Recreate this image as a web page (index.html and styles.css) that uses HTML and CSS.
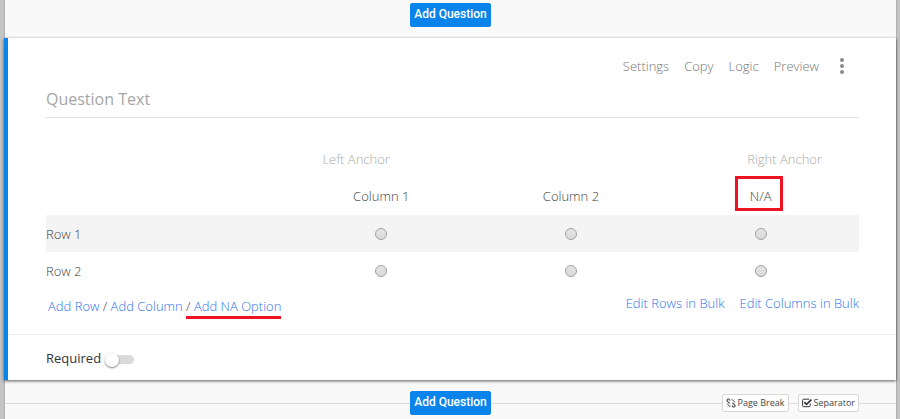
FILE: index.html
```html
<!DOCTYPE html>
<html lang="en">
<head>
<meta charset="utf-8">
<meta name="viewport" content="width=device-width, initial-scale=1">
<title>Survey editor</title>
<link rel="stylesheet" href="styles.css">
</head>
<body>
<main class="survey">
  <div class="insert-bar insert-bar-top">
    <button type="button" class="add-question">Add Question</button>
  </div>

  <section class="question">
    <div class="question-body">
      <nav class="actions">
        <a href="#settings">Settings</a>
        <a href="#copy">Copy</a>
        <a href="#logic">Logic</a>
        <a href="#preview">Preview</a>
        <button type="button" class="more" aria-label="More options">
          <svg width="6" height="16" viewBox="0 0 6 16"><g fill="#8b8b8b"><circle cx="3" cy="2" r="2"/><circle cx="3" cy="8" r="2"/><circle cx="3" cy="14" r="2"/></g></svg>
        </button>
      </nav>

      <input class="question-text" type="text" placeholder="Question Text" aria-label="Question Text">

      <div class="anchors">
        <input class="anchor" type="text" placeholder="Left Anchor" aria-label="Left Anchor">
        <input class="anchor" type="text" placeholder="Right Anchor" aria-label="Right Anchor">
      </div>

      <table class="matrix">
        <thead>
          <tr><td class="row-label"></td><th scope="col">Column 1</th><th scope="col">Column 2</th><th scope="col"><span class="marked">N/A</span></th></tr>
        </thead>
        <tbody>
          <tr>
            <th scope="row" class="row-label">Row 1</th>
            <td><input type="radio" name="row1" aria-label="Row 1, Column 1"></td>
            <td><input type="radio" name="row1" aria-label="Row 1, Column 2"></td>
            <td><input type="radio" name="row1" aria-label="Row 1, N/A"></td>
          </tr>
          <tr>
            <th scope="row" class="row-label">Row 2</th>
            <td><input type="radio" name="row2" aria-label="Row 2, Column 1"></td>
            <td><input type="radio" name="row2" aria-label="Row 2, Column 2"></td>
            <td><input type="radio" name="row2" aria-label="Row 2, N/A"></td>
          </tr>
        </tbody>
      </table>

      <div class="links">
        <div class="add-links"><a href="#row">Add Row</a> / <a href="#column">Add Column</a> <span class="underlined">/ <a href="#na">Add NA Option</a></span></div>
        <div class="bulk-links"><a href="#rows">Edit Rows in Bulk</a><a href="#columns">Edit Columns in Bulk</a></div>
      </div>
    </div>

    <div class="question-footer">
      <label for="required">Required</label>
      <input id="required" class="switch" type="checkbox">
    </div>
  </section>

  <div class="insert-bar insert-bar-bottom">
    <button type="button" class="add-question">Add Question</button>
    <div class="extras">
      <button type="button" class="extra">
        <svg width="10" height="10" viewBox="0 0 10 10" fill="none" stroke="#555" stroke-width="1.2"><path d="M4.3 2.5 3 1.2a1.3 1.3 0 0 0-1.8 1.8L3 4.8l1 .3M5.8 7.5 7 8.8A1.3 1.3 0 0 0 8.8 7L7 5.200 6 5"/><path stroke-width=".8" d="M6.200 2.700V.8M7.400 3.800h1.900M2.700 6.200H.8M3.800 7.300v1.900M6.900 3l1.300-1.300M3 7 1.700 8.300"/></svg>
        Page Break
      </button>
      <button type="button" class="extra">
        <svg width="10" height="10" viewBox="0 0 10 10" fill="none" stroke="#333"><path d="M8.200 5.500v2.200a1 1 0 0 1-1 1H1.600a1 1 0 0 1-1-1V2.200a1 1 0 0 1 1-1h5.600"/><path stroke-width="1.600" d="M2.300 4.200 4.500 6.300 9.400 1.600"/></svg>
        Separator
      </button>
    </div>
  </div>
</main>
</body>
</html>
```
FILE: styles.css
```css
* {
  box-sizing: border-box;
}

body {
  margin: 0;
  background: #c4c4c4;
  color: #444;
  font: 300 13px/20px "Open Sans", "Noto Sans", sans-serif;
}

button,
input {
  margin: 0;
  font: inherit;
}

a {
  color: #2f74e8;
  text-decoration: none;
}

.survey {
  min-height: 100vh;
  margin: 0 3px 0 4px;
  border: solid #b0b0b0;
  border-width: 0 1px;
  background: #f9f9f9;
}

.insert-bar {
  display: flex;
  justify-content: center;
  align-items: flex-start;
  position: relative;
}

.insert-bar-top {
  height: 38px;
  padding-top: 3px;
}

.insert-bar-bottom {
  padding-top: 11px;
}

.insert-bar-bottom::before {
  content: "";
  position: absolute;
  top: 23px;
  left: 0;
  right: 0;
  border-top: 1px solid #dcdcdc;
}

.add-question {
  position: relative;
  height: 24px;
  padding: 0 3px 2px;
  border: 1px solid #0a84ea;
  border-radius: 2px;
  background: #0a84ea;
  color: #fff;
  font-family: Roboto, sans-serif;
  font-size: 12px;
  font-weight: 500;
  line-height: 20px;
  white-space: nowrap;
}

.question {
  position: relative;
  margin-left: -1px;
  border-left: 4px solid #0a84ea;
  background: #fff;
  box-shadow: 0 1px 3px rgba(0, 0, 0, .65);
}

.question-body {
  padding: 18px 37px 18px 38px;
  border-bottom: 1px solid #eee;
}

.actions {
  display: flex;
  justify-content: flex-end;
  align-items: center;
  gap: 15px;
  padding-right: 14px;
}

.actions a {
  color: #777;
}

.more {
  display: flex;
  margin-left: 5px;
  padding: 0;
  border: 0;
  background: none;
}

.question-text {
  display: block;
  width: 100%;
  height: 42px;
  padding: 4px 0 0;
  border: 0;
  border-bottom: 1px solid #e2e2e2;
  font-size: 16px;
  font-weight: 400;
}

input::placeholder {
  color: #aaa;
  opacity: 1;
}

.question-text::placeholder {
  color: #a5a5a5;
}

.anchors {
  display: flex;
  justify-content: space-between;
  margin-top: 31px;
  padding: 0 37px 0 34%;
}

.anchor {
  width: 80px;
  height: 20px;
  padding: 0;
  border: 0;
}

.anchor:last-child {
  text-align: right;
}

.matrix {
  width: 100%;
  margin-top: 8px;
  border-collapse: collapse;
  table-layout: fixed;
}

.matrix th,
.matrix td {
  height: 37px;
  padding: 0 7px 0 0;
  font-weight: 300;
  text-align: center;
  vertical-align: middle;
}

.matrix thead th {
  height: 38px;
}

.matrix .row-label {
  width: 30%;
  text-align: left;
}

.matrix tbody tr:first-child {
  background: #f4f4f4;
}

.marked {
  position: relative;
}

.marked::before {
  content: "";
  position: absolute;
  inset: -11px -12px -6px -15px;
  border: 3px solid #ed1320;
}

.matrix input {
  display: block;
  width: 12px;
  height: 12px;
  margin: 0 auto;
  appearance: none;
  border: 1px solid #a2a2a2;
  border-radius: 50%;
  background: linear-gradient(#e5e5e5, #d9d9d9);
}

.links {
  display: flex;
  justify-content: space-between;
}

.add-links {
  padding: 7px 0 0 2px;
}

.underlined {
  padding-bottom: 1px;
  border-bottom: 3px solid #ed1320;
}

.bulk-links {
  display: flex;
  gap: 15px;
  padding-top: 4px;
}

.question-footer {
  display: flex;
  align-items: center;
  gap: 4px;
  height: 45px;
  padding-left: 38px;
  font-weight: 400;
}

.question-footer label {
  color: #333;
}

.switch {
  position: relative;
  width: 30px;
  height: 16px;
  margin-top: 4px;
  appearance: none;
}

.switch::before {
  content: "";
  position: absolute;
  inset: 3px 1px 4px 4px;
  border-radius: 5px;
  background: #dadada;
}

.switch::after {
  content: "";
  position: absolute;
  top: 1px;
  left: 0;
  width: 14px;
  height: 14px;
  border-radius: 50%;
  background: #fff;
  box-shadow: 0 1px 2px rgba(0, 0, 0, .5);
}

.extras {
  display: flex;
  gap: 9px;
  position: absolute;
  top: 14px;
  right: 37px;
}

.extra {
  display: flex;
  align-items: center;
  gap: 2px;
  height: 18px;
  padding: 0 3px;
  border: 1px solid #d8d8d8;
  border-radius: 2px;
  background: #fff;
  color: #444;
  font-size: 9px;
  font-weight: 400;
}
```
